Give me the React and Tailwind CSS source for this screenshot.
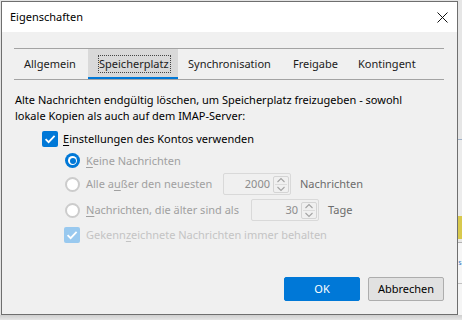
import React from 'react';

function Check({ disabled }) {
  return (
    <span
      className={`flex h-4 w-4 shrink-0 items-center justify-center rounded-[2px] ${
        disabled ? 'bg-[#99c9ef]' : 'bg-[#0078d7]'
      }`}
    >
      <svg width="12" height="12" viewBox="0 0 12 12" fill="none">
        <path d="M1.6 6.1 L4.6 9.1 L10.6 2.9" stroke="white" strokeWidth="1.8" />
      </svg>
    </span>
  );
}

function Radio({ checked }) {
  if (checked) {
    return (
      <span className="flex h-[15px] w-[15px] shrink-0 items-center justify-center rounded-full bg-[#0078d7]">
        <span className="flex h-[9px] w-[9px] items-center justify-center rounded-full bg-white">
          <span className="h-[6px] w-[6px] rounded-full bg-[#0078d7]" />
        </span>
      </span>
    );
  }
  return <span className="h-[15px] w-[15px] shrink-0 rounded-full border-2 border-[#cccccc] bg-white" />;
}

function Spinner() {
  return (
    <span className="flex h-[17px] w-[16px] flex-col items-center justify-center rounded-[2px] border border-[#d4d4d4]">
      <svg width="10" height="6" viewBox="0 0 10 6" fill="none">
        <path d="M1.5 5 L5 1.5 L8.5 5" stroke="#a3a3a3" strokeWidth="1.1" />
      </svg>
      <span className="my-[1px] h-px w-[12px] bg-[#dcdcdc]" />
      <svg width="10" height="6" viewBox="0 0 10 6" fill="none">
        <path d="M1.5 1 L5 4.5 L8.5 1" stroke="#a3a3a3" strokeWidth="1.1" />
      </svg>
    </span>
  );
}

function NumBox({ value }) {
  return (
    <span className="flex h-[22px] w-[68px] items-center justify-end gap-[3px] rounded-[2px] border border-[#d9d9d9] bg-[#f0f0f0] pr-[1px] text-[#8c8c8c]">
      <span>{value}</span>
      <Spinner />
    </span>
  );
}

const tabs = [
  { label: 'Allgemein', w: 'w-[74px]' },
  { label: 'Speicherplatz', w: 'w-[90px]', active: true },
  { label: 'Synchronisation', w: 'w-[105px]' },
  { label: 'Freigabe', w: 'w-[65px]' },
  { label: 'Kontingent', w: 'w-[79px]' },
];

export default function App() {
  return (
    <div className="flex h-[320px] w-[462px] flex-col overflow-hidden bg-[#e4e4e4] font-['Noto_Sans',sans-serif] text-[11px] leading-[16px] text-black">
      <div className="flex h-[315px]">
        {/* dialog */}
        <div className="ml-px mt-px flex h-[314px] w-[457px] flex-col border border-[#6f6f6f] bg-[#f0f0f0]">
          <div className="flex h-[30px] items-center justify-between bg-white pl-[8px] pr-[9px]">
            <span>Eigenschaften</span>
            <svg width="11" height="11" viewBox="0 0 11 11" fill="none">
              <path d="M0.5 0.5 L10.5 10.5 M10.5 0.5 L0.5 10.5" stroke="#111" strokeWidth="1" />
            </svg>
          </div>

          <div className="flex flex-1 flex-col">
            {/* tab strip */}
            <div className="ml-[12px] mr-[13px] mt-[16px] flex h-[32px] border-y border-[#a3a3a3] text-[#1b1b1b]">
              {tabs.map((t) => (
                <div
                  key={t.label}
                  className={`relative flex items-center pl-[10px] ${t.w} ${t.active ? 'bg-[#d9d9d9] pl-[9px]' : ''}`}
                >
                  {t.active ? (
                    <span className="flex h-[18px] items-center border border-dotted border-[#444] pr-px">{t.label}</span>
                  ) : (
                    <span>{t.label}</span>
                  )}
                  {t.active && <span className="absolute inset-x-0 bottom-0 h-[2px] bg-[#0078d7]" />}
                </div>
              ))}
            </div>

            <p className="ml-[13px] mt-[12px] whitespace-nowrap">
              Alte Nachrichten endgültig löschen, um Speicherplatz freizugeben - sowohl
              <br />
              lokale Kopien als auch auf dem IMAP-Server:
            </p>

            <div className="mt-[4px] flex h-[22px] items-center gap-[5px] pl-[40px]">
              <Check />
              <span>
                <u className="underline-offset-2">E</u>instellungen des Kontos verwenden
              </span>
            </div>

            <div className="flex h-[21px] items-center gap-[6px] pl-[63px] text-[#a0a0a0]">
              <Radio checked />
              <span>
                <u className="underline-offset-2">K</u>eine Nachrichten
              </span>
            </div>

            <div className="flex h-[26px] items-center pl-[63px] text-[#a0a0a0]">
              <Radio />
              <span className="w-[143px] pl-[6px]">
                Alle a<u className="underline-offset-2">u</u>ßer den neuesten
              </span>
              <NumBox value="2000" />
              <span className="ml-[9px] text-[#6c6c6c]">Nachrichten</span>
            </div>

            <div className="flex h-[26px] items-center pl-[63px] text-[#a0a0a0]">
              <Radio />
              <span className="w-[171px] pl-[6px]">
                <u className="underline-offset-2">N</u>achrichten, die älter sind als
              </span>
              <NumBox value="30" />
              <span className="ml-[9px] text-[#6c6c6c]">Tage</span>
            </div>

            <div className="flex h-[24px] items-center gap-[6px] pl-[62px] text-[#c4c4c4]">
              <Check disabled />
              <span>
                Gekenn<u className="underline-offset-2">z</u>eichnete Nachrichten immer behalten
              </span>
            </div>

            <div className="mb-[13px] mr-[13px] mt-auto flex justify-end gap-[8px]">
              <button className="flex h-[24px] w-[76px] items-center justify-center rounded-[2px] border border-[#0078d7] bg-[#0078d7] text-white">
                OK
              </button>
              <button className="flex h-[24px] w-[76px] items-center justify-center rounded-[2px] border border-[#adadad] bg-[#e1e1e1] text-black">
                Abbrechen
              </button>
            </div>
          </div>
        </div>

        {/* background window peeking out at the right */}
        <div className="flex w-[4px] flex-col bg-[#e6e6e6]">
          <div className="h-[139px]" />
          <div className="h-px bg-[#9eb0c8]" />
          <div className="h-[76px] bg-[#ececec]" />
          <div className="h-[23px] bg-[#d8c94d]" />
          <div className="h-[3px] bg-[#e8e8e8]" />
          <div className="h-px bg-[#b3b3b3]" />
          <div className="flex h-[40px] items-center justify-center bg-[#f6f6f6] text-[7px] leading-[8px] text-[#2f77c4]">
            s
          </div>
          <div className="h-px bg-[#c2c2c2]" />
          <div className="flex-1 bg-[#f5f5f5]" />
        </div>
      </div>
      <div className="flex-1 bg-gradient-to-b from-[#cfcfcf] to-[#e6e6e6]" />
    </div>
  );
}
